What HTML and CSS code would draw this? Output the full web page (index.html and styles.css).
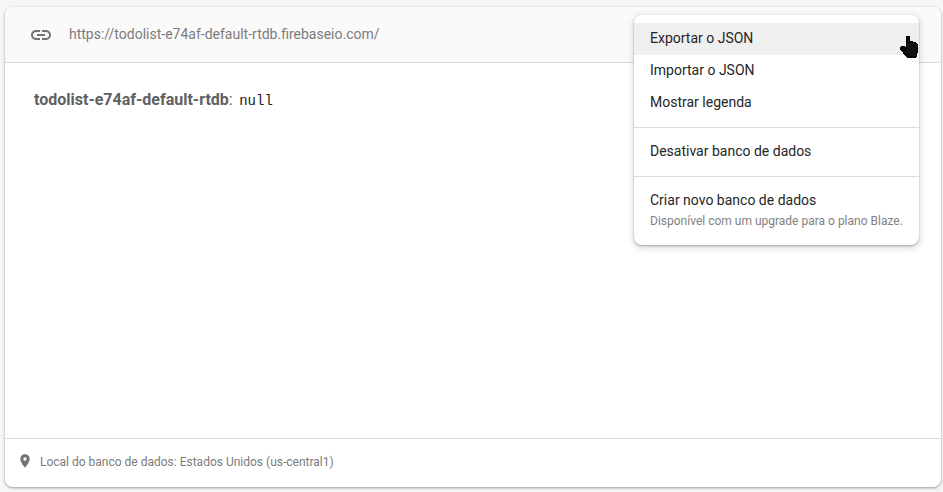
FILE: index.html
```html
<!DOCTYPE html>
<html lang="pt-BR">
<head>
<meta charset="utf-8">
<title>Realtime Database</title>
<link rel="stylesheet" href="styles.css">
</head>
<body>
<main class="card">
  <header class="toolbar">
    <svg class="link-icon" viewBox="0 0 24 24"><path d="M3.9 12c0-1.71 1.39-3.1 3.1-3.1h4V7H7c-2.76 0-5 2.24-5 5s2.24 5 5 5h4v-1.9H7c-1.71 0-3.1-1.39-3.1-3.1zM8 13h8v-2H8v2zm9-6h-4v1.9h4c1.71 0 3.1 1.39 3.1 3.1s-1.39 3.1-3.1 3.1h-4V17h4c2.76 0 5-2.24 5-5s-2.24-5-5-5z"/></svg>
    <span class="url">https://todolist-e74af-default-rtdb.firebaseio.com/</span>
  </header>
  <section class="data"><strong class="key">todolist-e74af-default-rtdb</strong><span class="colon">:</span><span class="value">null</span></section>
  <footer class="location">
    <svg class="pin-icon" viewBox="0 0 24 24"><path d="M12 2C8.13 2 5 5.13 5 9c0 5.25 7 13 7 13s7-7.75 7-13c0-3.87-3.13-7-7-7zm0 9.500a2.500 2.500 0 0 1 0-5 2.500 2.500 0 0 1 0 5z"/></svg>
    <span class="place">Local do banco de dados: Estados Unidos (us-central1)</span>
  </footer>
</main>
<nav class="menu">
  <div class="item active">Exportar o JSON</div>
  <div class="item">Importar o JSON</div>
  <div class="item">Mostrar legenda</div>
  <div class="divider"></div>
  <div class="item">Desativar banco de dados</div>
  <div class="divider"></div>
  <div class="item">Criar novo banco de dados</div>
  <div class="note">Disponível com um upgrade para o plano Blaze.</div>
</nav>
<svg class="cursor" viewBox="0 0 18 22" shape-rendering="crispEdges"><path fill="#000" d="M6 0h4v5h3v1h3v1h1v1h1v9h-1v4h-1v1H7v-1H6v-1H5v-1H4v-1H3v-2H2v-1H1v-1H0v-3h1v-1h4v1h1z"/><path fill="#111" d="M7 1h2v6h1V6h2v2h1V7h2v2h1V8h1v8h-1v4H8v-1H7v-1H6v-1H5v-1H4v-2h3z"/></svg>
</body>
</html>
```

FILE: styles.css
```css
* { box-sizing: border-box; }
body {
  margin: 0;
  height: 492px;
  padding: 7px 2px 5px 5px;
  overflow: hidden;
  background: #f5f6f8;
  font-family: Roboto, sans-serif;
  font-size: 14px;
}
.card {
  height: 480px;
  display: flex;
  flex-direction: column;
  overflow: hidden;
  border-radius: 8px;
  background: #fff;
  box-shadow: 0 1px 2px rgba(60, 64, 67, .32), 0 1px 3px 1px rgba(60, 64, 67, .14);
}
.toolbar {
  display: flex;
  align-items: center;
  height: 56px;
  padding-left: 24px;
  background: #fafafa;
  border-bottom: 1px solid #dcdcdc;
}
.link-icon { width: 24px; height: 24px; fill: #737373; }
.url { margin-left: 16px; padding-bottom: 2px; line-height: 20px; color: #7c7c7c; }
.data {
  flex: 1;
  display: flex;
  padding: 27px 29px;
  line-height: 20px;
  color: #616161;
}
.key { font-size: 16px; font-weight: 700; }
.colon { font-size: 16px; }
.value { margin: 1px 0 0 6.500px; font-family: "Liberation Mono", monospace; font-size: 14px; color: #212121; }
.location {
  display: flex;
  align-items: center;
  height: 49px;
  padding: 0 0 2px 12px;
  border-top: 1px solid #dcdcdc;
  font-size: 12px;
  color: #7c7c7c;
}
.pin-icon { width: 16px; height: 16px; margin-bottom: 2px; fill: #737373; }
.place { margin-left: 7px; padding-bottom: 1px; }
.menu {
  position: absolute;
  left: 634px;
  top: 15px;
  width: 285px;
  height: 230px;
  padding: 8px 0;
  border-radius: 8px;
  background: #fff;
  box-shadow: 0 1px 2px rgba(60, 64, 67, .4), 0 2px 6px 2px rgba(60, 64, 67, .14);
}
.item {
  height: 32px;
  padding-left: 16px;
  line-height: 31px;
  white-space: nowrap;
  color: #262626;
}
.active { background: #efefef; }
.divider { height: 1px; margin: 8px 0; background: #dcdcdc; }
.note { padding-left: 16px; margin-top: -4px; font-size: 12px; line-height: 16px; color: #828282; white-space: nowrap; }
.cursor { position: absolute; left: 900px; top: 36px; width: 18px; height: 22px; }
```
